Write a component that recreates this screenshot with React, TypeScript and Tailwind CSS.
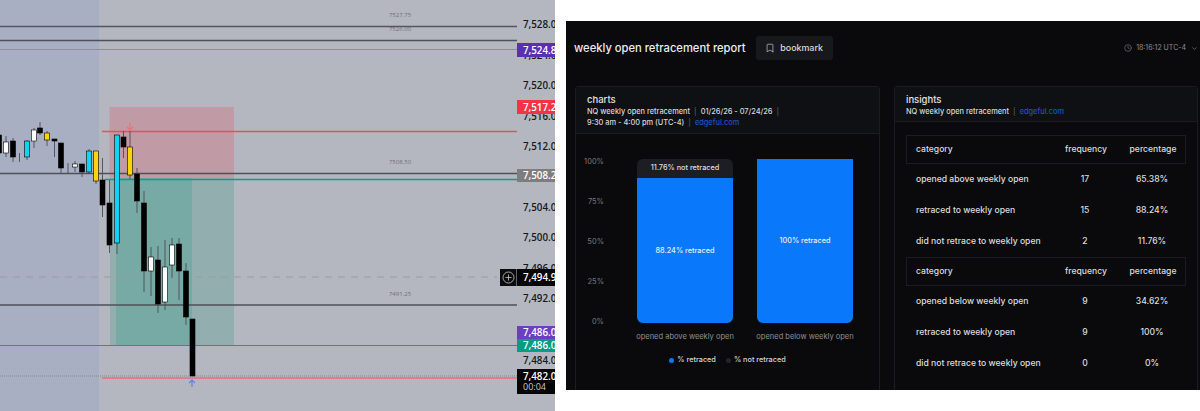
import { Bookmark, ChevronDown, Clock } from 'lucide-react'

type Candle = [number, number, number, number, number, string]

const BLACK = '#000000'
const WHITE = '#ffffff'
const CYAN = '#14d2f2'
const GOLD = '#ffd20a'

// x, wick top, body top, body bottom, wick bottom, fill
const candles: Candle[] = [
  [-1, 132, 135, 153, 156, BLACK],
  [6, 136, 142, 153, 157, WHITE],
  [13, 138, 141, 157, 162, BLACK],
  [19.5, 153, 156.5, 156.5, 162, BLACK],
  [27, 140, 141, 157, 160, CYAN],
  [34, 128, 130, 141, 148, WHITE],
  [40, 122, 128, 133, 135, BLACK],
  [47, 131, 133, 140, 146, GOLD],
  [54.5, 139, 139, 141, 157, BLACK],
  [61, 143, 143, 168, 173, BLACK],
  [68, 163, 165.5, 165.5, 174, BLACK],
  [75, 161, 164, 167, 172, WHITE],
  [82, 164, 164, 172, 177, BLACK],
  [89, 149, 151, 172, 174, CYAN],
  [96, 151, 151, 181, 184, GOLD],
  [102.5, 158, 180, 205, 217, BLACK],
  [109.5, 180, 203, 245, 253, BLACK],
  [117, 135, 135, 243, 254, CYAN],
  [123.5, 131, 137, 147, 158, BLACK],
  [130, 131, 147, 175, 179, GOLD],
  [137, 168, 174, 201, 213, BLACK],
  [144, 191, 203, 271, 292, BLACK],
  [151, 247, 257, 271, 296, WHITE],
  [158, 246, 260, 304, 313, BLACK],
  [165, 240, 267, 302, 310, WHITE],
  [172, 238, 245, 265, 278, WHITE],
  [179, 238, 244, 271, 300, BLACK],
  [186, 263, 271, 317, 325, BLACK],
  [192.5, 319, 319, 376, 376, BLACK],
]

const axisPrices: [string, number][] = [
  ['7,528.0', 28],
  ['7,524.0', 59],
  ['7,520.0', 89],
  ['7,516.0', 120],
  ['7,512.0', 150],
  ['7,504.0', 211],
  ['7,500.0', 241],
  ['7,496.0', 272],
  ['7,492.0', 302],
  ['7,484.0', 364],
]

const priceTags: [string, number, number, string][] = [
  ['7,524.8', 43, 14, '#5b2fb3'],
  ['7,517.2', 100, 14, '#f2334a'],
  ['7,508.2', 169, 13, '#7d7d7d'],
  ['7,486.0', 326, 13, '#6a3fc0'],
  ['7,486.0', 339, 13, '#089c82'],
]

const levelNotes: [string, number][] = [
  ['7527.75', 17],
  ['7526.00', 31],
  ['7508.50', 164],
  ['7491.25', 296],
]

function TradeChart() {
  return (
    <svg
      viewBox="0 0 555 411"
      className="w-[555px] h-[411px] shrink-0 font-['Open_Sans',sans-serif]"
    >
      <rect width="555" height="411" fill="#b5b7c0" />
      <rect width="99" height="411" fill="#a9afc3" />

      <rect x="109.5" y="107" width="124.5" height="71" fill="#c09aa4" />
      <rect x="110" y="178" width="124" height="167.5" fill="#93aeae" />
      <rect x="116" y="178" width="76" height="167.5" fill="#78aaa5" />

      <line x1="0" x2="517" y1="26.5" y2="26.5" stroke="#55575e" strokeWidth="1.3" />
      <line x1="0" x2="517" y1="40.5" y2="40.5" stroke="#4f5158" strokeWidth="1.3" />
      <line x1="0" x2="517" y1="49.5" y2="49.5" stroke="#8f87bd" strokeWidth="1.2" />
      <line x1="102" x2="517" y1="131.5" y2="131.5" stroke="#e4505f" strokeWidth="1.6" />
      <line x1="0" x2="517" y1="173.5" y2="173.5" stroke="#4f5158" strokeWidth="1.3" />
      <line x1="105" x2="517" y1="179.5" y2="179.5" stroke="#129a88" strokeWidth="1.5" />
      <line x1="0" x2="497" y1="277" y2="277" stroke="#9a9ca3" strokeDasharray="7 6" />
      <line x1="0" x2="517" y1="305" y2="305" stroke="#4f5158" strokeWidth="1.3" />
      <line x1="0" x2="517" y1="345.5" y2="345.5" stroke="#6f6ca6" strokeWidth="1.2" />
      <line x1="0" x2="517" y1="376" y2="376" stroke="#85868e" strokeDasharray="1 1" />
      <line x1="102" x2="517" y1="378" y2="378" stroke="#de808c" strokeWidth="2" />

      {candles.map(([x, wickTop, top, bottom, wickBottom, fill]) => (
        <g key={x}>
          <line x1={x} x2={x} y1={wickTop} y2={wickBottom} stroke="#4a4c52" strokeWidth="0.9" />
          <rect
            x={x - 2.5}
            y={top}
            width="5"
            height={bottom - top}
            fill={fill}
            stroke={BLACK}
            strokeWidth="0.6"
          />
        </g>
      ))}

      <path d="M130 123v7M127 127l3 3 3-3" fill="none" stroke="#ee6f7c" strokeWidth="1.2" />
      <path d="M192 387v-7M189 383l3-3 3 3" fill="none" stroke="#5b83e6" strokeWidth="1.2" />

      {levelNotes.map(([label, y]) => (
        <text key={y} x="400" y={y} textAnchor="middle" fontSize="6" fill="#6c6e75">
          {label}
        </text>
      ))}

      {axisPrices.map(([label, y]) => (
        <text key={y} x="523" y={y} fontSize="9.8" fontWeight="600" fill="#17181c">
          {label}
        </text>
      ))}

      {priceTags.map(([label, y, h, fill]) => (
        <g key={fill}>
          <rect x="517" y={y} width="38" height={h} fill={fill} />
          <text x="523" y={y + h - 3.5} fontSize="9.8" fontWeight="600" fill="#ffffff">
            {label}
          </text>
        </g>
      ))}

      <rect x="500" y="269" width="16.5" height="17" fill="#0c0c0e" />
      <circle cx="508.5" cy="277.5" r="5.5" fill="none" stroke="#c9c9cc" strokeWidth="0.8" />
      <path d="M508.5 274.5v6M505.5 277.5h6" stroke="#c9c9cc" strokeWidth="0.8" />
      <rect x="517" y="269" width="38" height="17" fill="#050505" />
      <text x="523" y="281" fontSize="9.8" fontWeight="600" fill="#ffffff">
        7,494.9
      </text>

      <rect x="517" y="369" width="38" height="25" fill="#050505" />
      <text x="523" y="380" fontSize="9.8" fontWeight="600" fill="#ffffff">
        7,482.0
      </text>
      <text x="523" y="390" fontSize="9" fill="#c8c8c8">
        00:04
      </text>
    </svg>
  )
}

function CardHeader({
  title,
  height,
  children,
}: {
  title: string
  height: string
  children: React.ReactNode
}) {
  return (
    <div className={`${height} shrink-0 border-b border-[#1b1c20] bg-[#0f1013] px-[11px] pt-[7px]`}>
      <div className="text-[9.5px] leading-[12px] font-medium text-[#e2e2e4]">{title}</div>
      <div className="text-[7.4px] leading-[11px] font-medium text-[#d8d8db]">{children}</div>
    </div>
  )
}

const Sep = () => <span className="mx-[4px] text-[#55565c]">|</span>
const Edge = () => <span className="text-[#1d52c4]">edgeful.com</span>

function StackedBars() {
  return (
    <div className="flex-1 bg-[#0a0a0d]">
      <div className="flex pt-[25px]">
        <div className="w-[28px] h-[172px] -mt-[3px] flex flex-col justify-between items-end text-[7.5px] leading-[12px] text-[#77787d]">
          <span>100%</span>
          <span>75%</span>
          <span>50%</span>
          <span>25%</span>
          <span>0%</span>
        </div>
        <div className="ml-[33px] flex gap-[24px]">
          <div className="w-[96px] h-[164px] flex flex-col rounded-[6px] overflow-hidden">
            <div className="h-[19px] bg-[#1d1e23] flex items-center justify-center text-[7.3px] font-medium text-[#dedee1]">
              11.76% not retraced
            </div>
            <div className="flex-1 bg-[#0a78fa] flex items-center justify-center pt-[2px] text-[7.3px] font-medium text-[#e4efff]">
              88.24% retraced
            </div>
          </div>
          <div className="w-[96px] h-[164px] bg-[#0a78fa] rounded-b-[6px] flex items-center justify-center text-[7.3px] font-medium text-[#e4efff]">
            100% retraced
          </div>
        </div>
      </div>
      <div className="ml-[61px] mt-[3px] flex gap-[24px] text-[7.5px] leading-[12px] text-[#8f9095]">
        <div className="w-[96px] flex justify-center whitespace-nowrap">opened above weekly open</div>
        <div className="w-[96px] flex justify-center whitespace-nowrap">opened below weekly open</div>
      </div>
      <div className="mt-[11px] flex justify-center gap-[10px] text-[7.3px] leading-[12px] font-medium text-[#d4d4d7]">
        <div className="flex items-center gap-[3px]">
          <span className="w-[5px] h-[5px] rounded-full bg-[#0a78fa]" />% retraced
        </div>
        <div className="flex items-center gap-[3px]">
          <span className="w-[5px] h-[5px] rounded-full bg-[#24252a]" />% not retraced
        </div>
      </div>
    </div>
  )
}

const ROW = 'grid grid-cols-[146px_66px_68px] items-center text-[8.6px] font-medium text-[#dcdcde]'

function StatsBlock({ rows }: { rows: [string, string, string][] }) {
  return (
    <div>
      <div className={`${ROW} h-[29px] border border-[#1b1c20] text-[#c9c9cc]`}>
        <span className="pl-[9px]">category</span>
        <span className="text-center">frequency</span>
        <span className="text-center">percentage</span>
      </div>
      {rows.map(([cat, freq, pct]) => (
        <div key={cat} className={`${ROW} h-[31px]`}>
          <span className="pl-[10px] whitespace-nowrap">{cat}</span>
          <span className="text-center">{freq}</span>
          <span className="text-center">{pct}</span>
        </div>
      ))}
    </div>
  )
}

function ReportPanel() {
  return (
    <div className="mt-[21px] h-[369px] w-[634px] shrink-0 ml-[11px] overflow-hidden bg-[#0a0a0d] font-['Inter',sans-serif]">
      <div className="flex items-center h-[24px] mt-[15px] pl-[8px] pr-[2px]">
        <h1 className="text-[11.2px] font-medium text-[#ececee] whitespace-nowrap">
          weekly open retracement report
        </h1>
        <button className="ml-[10px] flex items-center gap-[5px] h-[24px] w-[77px] justify-center rounded-[3px] bg-[#17181c] text-[8.9px] font-medium text-[#dcdcde]">
          <Bookmark size={10} strokeWidth={1.5} />
          bookmark
        </button>
        <div className="ml-auto flex items-center gap-[4px] text-[7px] text-[#8e8f94]">
          <Clock size={8} strokeWidth={1.5} />
          <span>18:16:12 UTC-4</span>
          <ChevronDown size={7} className="ml-[1px]" />
        </div>
      </div>

      <div className="mt-[26px] flex gap-[14px] pl-[9px]">
        <section className="w-[305px] h-[320px] flex flex-col border border-[#1b1c20] rounded-t-[3px]">
          <CardHeader title="charts" height="h-[47px]">
            <div>
              NQ weekly open retracement
              <Sep />
              01/26/26 - 07/24/26
              <Sep />
            </div>
            <div>
              9:30 am - 4:00 pm (UTC-4)
              <Sep />
              <Edge />
            </div>
          </CardHeader>
          <StackedBars />
        </section>

        <section className="w-[304px] h-[320px] flex flex-col border border-[#1b1c20] rounded-t-[3px]">
          <CardHeader title="insights" height="h-[35px]">
            NQ weekly open retracement
            <Sep />
            <Edge />
          </CardHeader>
          <div className="px-[11px] pt-[13px]">
            <StatsBlock
              rows={[
                ['opened above weekly open', '17', '65.38%'],
                ['retraced to weekly open', '15', '88.24%'],
                ['did not retrace to weekly open', '2', '11.76%'],
              ]}
            />
            <StatsBlock
              rows={[
                ['opened below weekly open', '9', '34.62%'],
                ['retraced to weekly open', '9', '100%'],
                ['did not retrace to weekly open', '0', '0%'],
              ]}
            />
          </div>
        </section>
      </div>
    </div>
  )
}

export default function App() {
  return (
    <div className="flex w-[1200px] h-[411px] overflow-hidden bg-white">
      <TradeChart />
      <ReportPanel />
    </div>
  )
}
